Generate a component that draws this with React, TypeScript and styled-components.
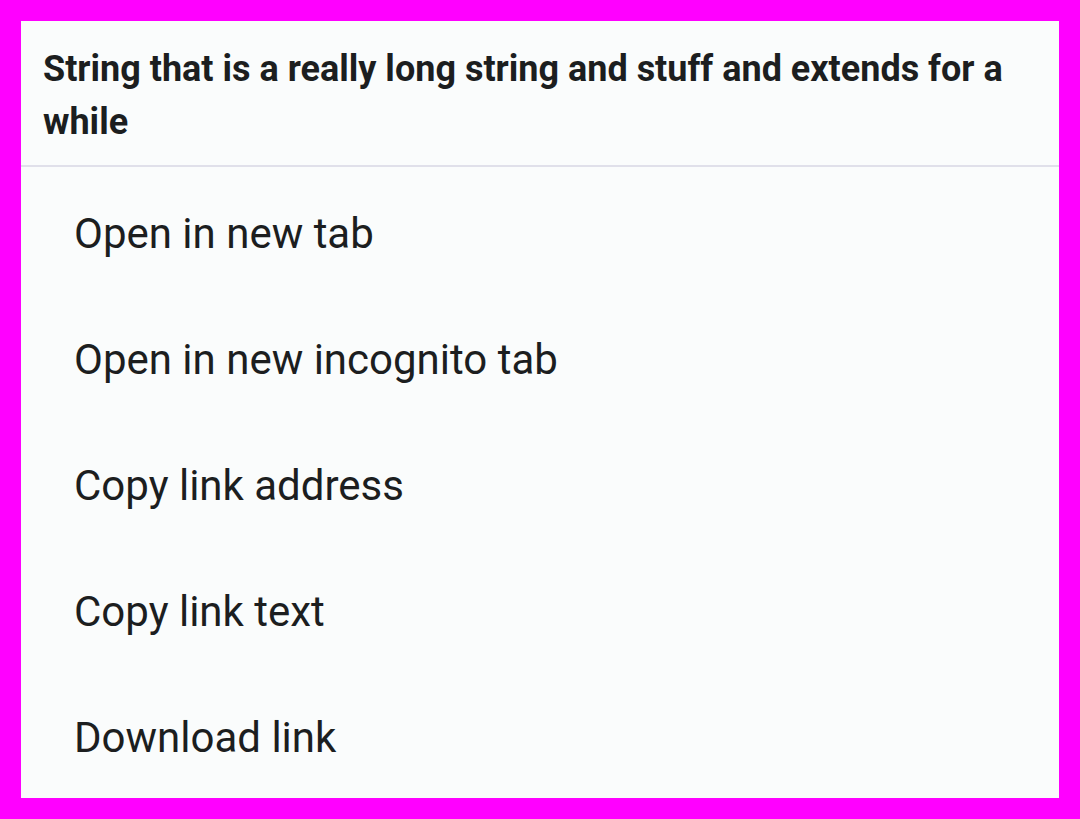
import styled, { createGlobalStyle } from 'styled-components';

const items = [
  'Open in new tab',
  'Open in new incognito tab',
  'Copy link address',
  'Copy link text',
  'Download link',
];

export default function App() {
  return (
    <>
      <GlobalStyle />
      <Frame>
        <Menu>
          <Title>String that is a really long string and stuff and extends for a while</Title>
          <List>
            {items.map((label) => (
              <Item key={label}>{label}</Item>
            ))}
          </List>
        </Menu>
      </Frame>
    </>
  );
}

const GlobalStyle = createGlobalStyle`
  html, body {
    margin: 0;
    padding: 0;
    background: #ff00ff;
  }
  body {
    font-family: Roboto, "Liberation Sans", sans-serif;
    color: #1c1e1f;
  }
`;

const Frame = styled.div`
  padding: 21px;
  box-sizing: border-box;
  width: 1080px;
  height: 819px;
`;

const Menu = styled.div`
  background: #fafcfc;
  height: 100%;
  display: flex;
  flex-direction: column;
`;

const Title = styled.div`
  font-size: 36px;
  font-weight: 700;
  line-height: 53px;
  padding: 22px 22px 16px;
  border-bottom: 2px solid #e0e0ea;
`;

const List = styled.ul`
  margin: 0;
  padding: 0;
  list-style: none;
  flex: 1;
  display: flex;
  flex-direction: column;
`;

const Item = styled.li`
  height: 126px;
  box-sizing: border-box;
  display: flex;
  align-items: center;
  padding: 7px 0 0 53px;
  font-size: 42px;
  font-weight: 400;
`;
